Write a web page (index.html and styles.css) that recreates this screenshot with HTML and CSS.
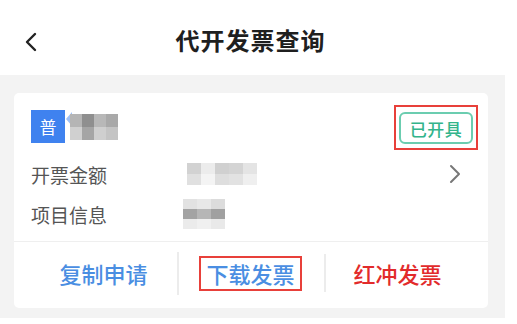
FILE: index.html
```html
<!DOCTYPE html>
<html lang="zh">
<head>
<meta charset="utf-8">
<link rel="stylesheet" href="styles.css">
</head>
<body>
<div class="page">
  <header class="topbar">
    <svg class="back" width="14" height="20" viewBox="0 0 14 20"><polyline points="11,2 3,10 11,18" fill="none" stroke="#222" stroke-width="2.4" stroke-linecap="round" stroke-linejoin="round"/></svg>
    <h1 class="title">代开发票查询</h1>
  </header>
  <main class="content">
    <section class="card">
      <div class="card-body">
        <div class="row-head">
          <div class="type">
            <span class="type-badge">普</span>
            <span class="tip"></span>
            <span class="mosaic m-name">
              <i style="background:#b5b5b5"></i><i style="background:#8f8f8f"></i><i style="background:#b8b8b8"></i><i style="background:#a9a9a9"></i>
              <i style="background:#d0d0d0"></i><i style="background:#a5a5a5"></i><i style="background:#cfcfcf"></i><i style="background:#c4c4c4"></i>
            </span>
          </div>
          <span class="status">已开具</span>
        </div>
        <div class="row">
          <span class="label">开票金额</span>
          <span class="mosaic m-amount">
            <i style="background:#d2d2d2"></i><i style="background:#ececec"></i><i style="background:#d0d0d0"></i><i style="background:#d4d4d4"></i><i style="background:#e4e4e4"></i>
            <i style="background:#e0e0e0"></i><i style="background:#f4f4f4"></i><i style="background:#dedede"></i><i style="background:#e2e2e2"></i><i style="background:#efefef"></i>
          </span>
          <svg class="chev" width="12" height="20" viewBox="0 0 12 20"><polyline points="2,2 10,10 2,18" fill="none" stroke="#777" stroke-width="2" stroke-linecap="round" stroke-linejoin="round"/></svg>
        </div>
        <div class="row">
          <span class="label">项目信息</span>
          <span class="mosaic m-item">
            <i style="background:#e2e2e2"></i><i style="background:#e8e8e8"></i><i style="background:#dcdcdc"></i>
            <i style="background:#a3a3a3"></i><i style="background:#b6b6b6"></i><i style="background:#a0a0a0"></i>
            <i style="background:#ebebeb"></i><i style="background:#f0f0f0"></i><i style="background:#e9e9e9"></i>
          </span>
        </div>
      </div>
      <div class="actions">
        <div class="action blue">复制申请</div>
        <div class="action"><span class="blue marked">下载发票</span></div>
        <div class="action red">红冲发票</div>
      </div>
    </section>
  </main>
</div>
</body>
</html>
```

FILE: styles.css
```css
* { box-sizing: border-box; margin: 0; padding: 0; }
body {
  margin: 0;
  background: #fff;
  font-family: "Noto Sans CJK SC", "Noto Sans", sans-serif;
  width: 517px;
  height: 324px;
  overflow: hidden;
}
.page { width: 517px; }
.topbar {
  height: 75px;
  display: flex;
  align-items: center;
  justify-content: center;
  position: relative;
  background: #fff;
  padding-right: 16px;
}
.back { position: absolute; left: 24px; top: 32px; }
.title {
  font-size: 24px;
  font-weight: 700;
  color: #1f1f1f;
  letter-spacing: 1px;
  margin-top: 4px;
}
.content {
  width: 505px;
  height: 243px;
  background: #f3f3f3;
  padding: 18px 17px 0 14px;
}
.card {
  background: #fff;
  border-radius: 5px;
  height: 215px;
  display: flex;
  flex-direction: column;
}
.card-body {
  padding: 17px 15px 7px 17px;
  border-bottom: 1px solid #efefef;
}
.row-head {
  height: 33px;
  display: flex;
  justify-content: space-between;
  align-items: center;
  margin-bottom: 11px;
}
.type { display: flex; align-items: center; }
.type-badge {
  width: 34px;
  height: 33px;
  background: #3f82ef;
  color: #fff;
  font-size: 17px;
  display: flex;
  align-items: center;
  justify-content: center;
}
.tip {
  width: 0; height: 0;
  border-top: 7px solid transparent;
  border-bottom: 7px solid transparent;
  border-right: 6px solid #9fc0f5;
  margin-left: 1px;
  align-self: flex-start;
  margin-top: 2px;
}
.mosaic { display: grid; filter: blur(0.6px); }
.mosaic i { display: block; }
.m-name { grid-template-columns: repeat(4, 12px); grid-auto-rows: 13px; margin-left: -2px; }
.m-amount { grid-template-columns: repeat(5, 14px); grid-auto-rows: 11px; margin-left: 77px; }
.m-item { grid-template-columns: repeat(3, 14px); grid-auto-rows: 10px; margin-left: 73px; }
.status {
  position: relative;
  margin-top: 3px;
  width: 74px;
  height: 32px;
  border: 2px solid #6bcdb0;
  border-radius: 6px;
  color: #33b48b;
  font-size: 17px;
  font-weight: 500;
  display: flex;
  align-items: center;
  justify-content: center;
  letter-spacing: 0.5px;
}
.status::after {
  content: "";
  position: absolute;
  top: -9px; bottom: -8px; left: -7px; right: -7px;
  border: 2px solid #e8403a;
}
.row {
  height: 40px;
  display: flex;
  align-items: center;
}
.label { font-size: 19px; color: #555; width: 79px; }
.chev { margin-left: auto; margin-right: 12px; }
.actions {
  flex: 1;
  display: flex;
  align-items: center;
  padding-left: 16px;
  padding-bottom: 4px;
}
.action {
  width: 147px;
  text-align: center;
  font-size: 22px;
  font-weight: 500;
  position: relative;
  line-height: 30px;
}
.action + .action::before {
  content: "";
  position: absolute;
  left: 0;
  top: -4px;
  bottom: -4px;
  border-left: 2px solid #ececec;
}
.blue { color: #4a8ee2; }
.red { color: #e22b2b; }
.marked {
  display: inline-block;
  border: 2px solid #e8403a;
  padding: 0 5px;
  line-height: 31px;
}
```
